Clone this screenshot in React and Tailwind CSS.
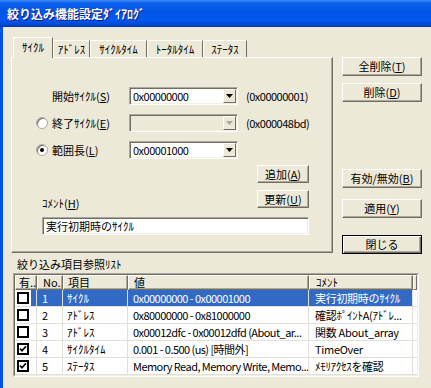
const sunken =
  "border border-t-[#ACA899] border-l-[#ACA899] border-r-white border-b-white shadow-[inset_1px_1px_0_#716F64,inset_-1px_-1px_0_#F1EFE2]";

function Btn({ children, className = "", def = false }) {
  const edge = def
    ? "border border-black shadow-[inset_1px_1px_0_#fff,inset_-1px_-1px_0_#716F64,inset_-2px_-2px_0_#ACA899]"
    : "border border-t-white border-l-white border-r-[#716F64] border-b-[#716F64] shadow-[inset_-1px_-1px_0_#ACA899]";
  return (
    <div className={`flex items-center justify-center bg-[#ECE9D8] ${edge} ${className}`}>
      {children}
    </div>
  );
}

function Combo({ value = "", disabled = false }) {
  return (
    <div className={`w-[109px] h-[18px] p-[1px] flex ${sunken} ${disabled ? "bg-[#ECE9D8]" : "bg-white"}`}>
      <div className="flex-1 flex items-center pl-[2px] whitespace-nowrap tracking-[-0.5px]">{value}</div>
      <div className="w-[13px] h-full flex items-center justify-center bg-[#ECE9D8] border border-t-white border-l-white border-r-[#716F64] border-b-[#716F64]">
        <svg width="7" height="4" viewBox="0 0 7 4">
          <path d="M0 0h7L3.5 4z" fill={disabled ? "#ACA899" : "#000"} />
        </svg>
      </div>
    </div>
  );
}

function Radio({ checked }) {
  return (
    <div className="w-[12px] h-[12px] rounded-full bg-white border border-[#ACA899] shadow-[inset_1px_1px_0_#716F64] flex items-center justify-center">
      {checked && <div className="w-[4px] h-[4px] rounded-full bg-black" />}
    </div>
  );
}

function FieldRow({ radio, checked, label, value, disabled, hex }) {
  return (
    <div className="flex items-center h-[18px]">
      <div className="w-[16px]">{radio && <Radio checked={checked} />}</div>
      <div className="w-[77px] whitespace-nowrap">{label}</div>
      <Combo value={value} disabled={disabled} />
      {hex && <div className="ml-[8px] whitespace-nowrap tracking-[-0.5px]">{hex}</div>}
    </div>
  );
}

const tabs = [
  { label: "ｻｲｸﾙ", w: "w-[40px]", sel: true },
  { label: "ｱﾄﾞﾚｽ", w: "w-[37px]" },
  { label: "ｻｲｸﾙﾀｲﾑ", w: "w-[57px]" },
  { label: "ﾄｰﾀﾙﾀｲﾑ", w: "w-[56px]" },
  { label: "ｽﾃｰﾀｽ", w: "w-[44px]" },
];

function TabControl() {
  return (
    <div className="w-[322px] flex flex-col">
      <div className="h-[20px] flex items-end pl-[2px]">
        {tabs.map((t) =>
          t.sel ? (
            <div
              key={t.label}
              className={`${t.w} h-[21px] -mb-px relative z-10 bg-[#ECE9D8] border-t border-l border-t-white border-l-white border-r border-r-[#716F64] rounded-tl-[2px] flex items-center justify-center pb-[2px]`}
            >
              {t.label}
            </div>
          ) : (
            <div
              key={t.label}
              className={`${t.w} h-[17px] bg-[#ECE9D8] border-t border-l border-t-white border-l-white border-r border-r-[#716F64] flex items-center justify-center`}
            >
              {t.label}
            </div>
          )
        )}
      </div>
      <div className="h-[196px] border border-t-white border-l-white border-r-[#716F64] border-b-[#716F64] shadow-[inset_-1px_-1px_0_#ACA899] pl-[24px] pt-[29px]">
        <div className="flex flex-col gap-[9px]">
          <FieldRow label={<>開始ｻｲｸﾙ(<u>S</u>)</>} value="0x00000000" hex="(0x00000001)" />
          <FieldRow radio label={<>終了ｻｲｸﾙ(<u>E</u>)</>} disabled hex="(0x000048bd)" />
          <FieldRow radio checked label={<>範囲長(<u>L</u>)</>} value="0x00001000" />
        </div>
        <div className="ml-[6px] mt-[6px] w-[267px] flex items-end justify-between">
          <div className="-mb-[2px]">ｺﾒﾝﾄ(<u>H</u>)</div>
          <div className="flex flex-col gap-[7px]">
            <Btn className="w-[52px] h-[18px]">追加(<u>A</u>)</Btn>
            <Btn className="w-[52px] h-[18px]">更新(<u>U</u>)</Btn>
          </div>
        </div>
        <div className={`ml-[6px] mt-[9px] w-[267px] h-[18px] bg-white flex items-center pl-[3px] ${sunken}`}>
          実行初期時のｻｲｸﾙ
        </div>
      </div>
    </div>
  );
}

const cols = ["w-[22px]", "w-[26px]", "w-[65px]", "w-[181px]", "w-[104px]"];
const pads = ["pl-[3px]", "pl-[5px]", "pl-[4px]", "pl-[5px]", "pl-[6px]"];

const rows = [
  { on: false, no: "1", item: "ｻｲｸﾙ", value: "0x00000000 - 0x00001000", comment: "実行初期時のｻｲｸﾙ", sel: true },
  { on: false, no: "2", item: "ｱﾄﾞﾚｽ", value: "0x80000000 - 0x81000000", comment: "確認ﾎﾟｲﾝﾄA(ｱﾄﾞﾚ..." },
  { on: false, no: "3", item: "ｱﾄﾞﾚｽ", value: "0x00012dfc - 0x00012dfd (About_ar...", comment: "関数 About_array" },
  { on: true, no: "4", item: "ｻｲｸﾙﾀｲﾑ", value: "0.001 - 0.500 (us) [時間外]", comment: "TimeOver" },
  { on: true, no: "5", item: "ｽﾃｰﾀｽ", value: "Memory Read, Memory Write, Memo...", comment: "ﾒﾓﾘｱｸｾｽを確認" },
];

function Check({ on }) {
  return (
    <div className="w-[12px] h-[12px] border-2 border-black bg-white flex items-center justify-center">
      {on && (
        <svg width="8" height="8" viewBox="0 0 8 8">
          <path d="M1 3.6l2 2.2L7 1.2" stroke="#000" strokeWidth="1.7" fill="none" />
        </svg>
      )}
    </div>
  );
}

function ListView() {
  const head = ["有..", "No.", "項目", "値", "ｺﾒﾝﾄ"];
  return (
    <div className="ml-[2px] mt-[2px] w-[406px] h-[104px] border border-t-[#ACA899] border-l-[#ACA899] border-r-white border-b-white">
      <div className="h-full border border-t-[#716F64] border-l-[#716F64] border-r-[#F1EFE2] border-b-[#F1EFE2] bg-white overflow-hidden">
        <div className="flex h-[15px]">
          {head.map((h, i) => (
            <div
              key={h}
              className={`${cols[i]} ${pads[i]} shrink-0 h-full bg-[#ECE9D8] border border-t-white border-l-white border-r-[#716F64] border-b-[#716F64] shadow-[inset_-1px_-1px_0_#ACA899] flex items-center whitespace-nowrap overflow-hidden`}
            >
              {h}
            </div>
          ))}
          <div className="flex-1 h-full bg-[#ECE9D8] border border-t-white border-l-white border-r-[#716F64] border-b-[#716F64]" />
        </div>
        {rows.map((r) => {
          const cell = `h-full shrink-0 border-r border-[#E2E0D6] flex items-center whitespace-nowrap overflow-hidden ${
            r.sel ? "bg-[#316AC5] text-white" : ""
          }`;
          return (
            <div key={r.no} className="flex h-[17px] border-b border-[#E2E0D6]">
              <div className={`${cols[0]} h-full shrink-0 border-r border-[#E2E0D6] flex items-center pl-[2px]`}>
                <Check on={r.on} />
                {r.sel && <div className="ml-auto w-[5px] h-full bg-[#316AC5]" />}
              </div>
              <div className={`${cols[1]} ${pads[1]} ${cell}`}>{r.no}</div>
              <div className={`${cols[2]} ${pads[2]} ${cell}`}>{r.item}</div>
              <div className={`${cols[3]} ${pads[3]} ${cell} tracking-[-0.55px]`}>{r.value}</div>
              <div className={`${cols[4]} ${pads[4]} ${cell} tracking-[-0.3px]`}>{r.comment}</div>
              <div className="flex-1 h-full" />
            </div>
          );
        })}
      </div>
    </div>
  );
}

export default function App() {
  return (
    <div className="w-[431px] h-[388px] overflow-hidden flex flex-col bg-[#ECE9D8] font-['Noto_Sans_CJK_JP',sans-serif] text-[11px] leading-[13px] text-black">
      <div className="h-[27px] shrink-0 flex items-center pl-[7px] bg-[linear-gradient(to_bottom,#3D8CF5_0%,#0A5FEA_12%,#0055E5_45%,#0058EE_75%,#0046D3_92%,#0038B0_100%)] text-white font-bold text-[12px] [text-shadow:1px_1px_0_#0A1883]">
        絞り込み機能設定ﾀﾞｲｱﾛｸﾞ
      </div>
      <div className="flex-1 border-l-[3px] border-l-[#0055E5] pl-[8px] pt-[10px]">
        <div className="flex items-start">
          <TabControl />
          <div className="ml-[9px] pt-[20px] w-[80px] flex flex-col">
            <Btn className="h-[19px]">全削除(<u>T</u>)</Btn>
            <Btn className="h-[19px] mt-[7px]">削除(<u>D</u>)</Btn>
            <Btn className="h-[19px] mt-[67px]">有効/無効(<u>B</u>)</Btn>
            <Btn className="h-[19px] mt-[11px]">適用(<u>Y</u>)</Btn>
            <Btn def className="h-[19px] mt-[17px]">閉じる</Btn>
          </div>
        </div>
        <div className="ml-[6px] mt-[4px] whitespace-nowrap">絞り込み項目参照ﾘｽﾄ</div>
        <ListView />
      </div>
    </div>
  );
}
